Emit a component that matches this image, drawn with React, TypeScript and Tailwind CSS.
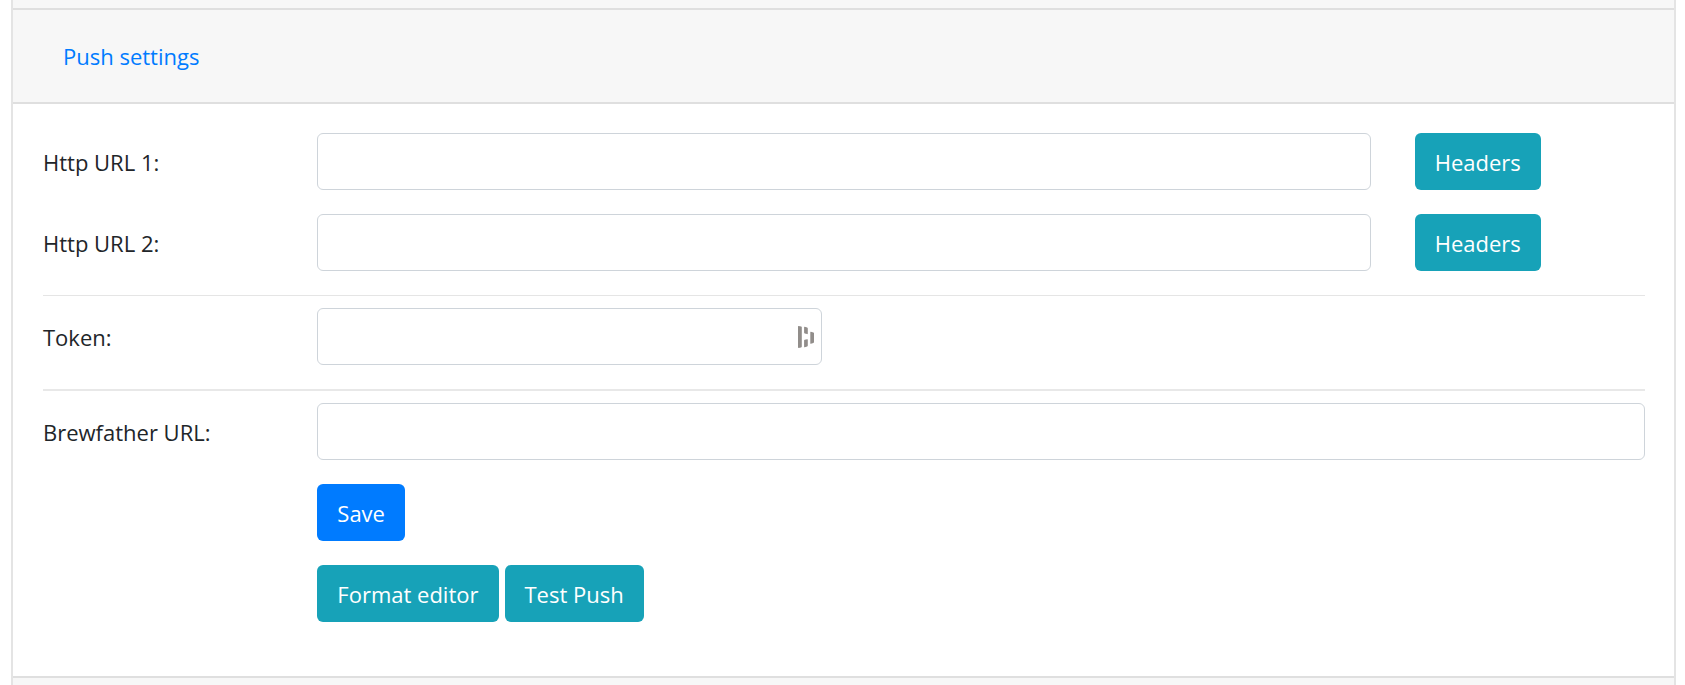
import type { ReactNode } from "react";

const fieldClass =
  "h-[57px] w-full rounded-md border border-[#ced4da] bg-white px-[18px] text-[22px] text-[#495057] outline-none focus:border-[#80bdff]";

function Label({ htmlFor, children }: { htmlFor: string; children: ReactNode }) {
  return (
    <label htmlFor={htmlFor} className="col-span-2 whitespace-nowrap">
      {children}
    </label>
  );
}

function Row({ children }: { children: ReactNode }) {
  return <div className="mb-6 grid grid-cols-12 items-center gap-x-11">{children}</div>;
}

function Button({ primary = false, children }: { primary?: boolean; children: ReactNode }) {
  return (
    <button
      type="button"
      className={
        primary
          ? "h-[57px] cursor-pointer whitespace-nowrap rounded-md bg-[#007bff] px-5 text-white"
          : "h-[57px] cursor-pointer whitespace-nowrap rounded-md bg-[#17a2b8] px-5 text-white"
      }
    >
      {children}
    </button>
  );
}

function VaultIcon() {
  return (
    <svg width="16" height="22" viewBox="0 0 16 22" fill="#918d8a" aria-hidden="true">
      <path d="M0 .6Q0 0 .7 .1L3.2 .6Q3.8 .8 3.8 1.4V20.6Q3.8 21.2 3.1 21.4L.7 22Q0 22 0 21.3Z" />
      <path d="M6.1 1.2Q6.1 .6 6.7 .8L9.2 1.6Q9.8 1.9 9.8 2.5V7.5Q9.8 8.3 9.2 8.1L6.7 7.4Q6.1 7.2 6.1 6.6Z" />
      <path d="M6.1 14.6Q6.1 14 6.7 13.8L9.2 13.2Q9.8 13.1 9.8 13.7V19.6Q9.8 20.2 9.2 20.5L6.7 21.3Q6.1 21.5 6.1 20.8Z" />
      <path d="M12.3 6.2Q12.3 5.5 12.9 5.7L15.4 6.4Q16 6.6 16 7.2V16Q16 16.6 15.4 16.9L12.9 17.7Q12.3 17.9 12.3 17.2Z" />
    </svg>
  );
}

export default function App() {
  return (
    <main className="bg-white pr-[9px] pl-[11px] font-['Open_Sans','Noto_Sans',sans-serif] text-[22px] leading-[36px] text-[#212529]">
      <div className="border-x-2 border-[#e4e4e4]">
        <div className="h-2 bg-[#f7f7f7]" />
        <section>
          <h2 className="flex h-24 items-center border-y-2 border-[#dfdfdf] bg-[#f7f7f7] px-[30px]">
            <button type="button" className="cursor-pointer px-5 text-[#007bff]">
              Push settings
            </button>
          </h2>
          <form className="pt-[29px] pr-[29px] pb-[30px] pl-[30px]">
            <Row>
              <Label htmlFor="url1">Http URL 1:</Label>
              <div className="col-span-8">
                <input id="url1" type="url" className={fieldClass} />
              </div>
              <div className="col-span-2">
                <Button>Headers</Button>
              </div>
            </Row>
            <Row>
              <Label htmlFor="url2">Http URL 2:</Label>
              <div className="col-span-8">
                <input id="url2" type="url" className={fieldClass} />
              </div>
              <div className="col-span-2">
                <Button>Headers</Button>
              </div>
            </Row>
            <hr className="mb-3 border-t border-[#e5e5e5]" />
            <Row>
              <Label htmlFor="token">Token:</Label>
              <div className="relative col-span-4">
                <input id="token" type="text" className={fieldClass} />
                <span className="pointer-events-none absolute inset-y-0 right-2 flex items-center">
                  <VaultIcon />
                </span>
              </div>
            </Row>
            <hr className="mb-3 border-t-2 border-[#e8e8e8]" />
            <Row>
              <Label htmlFor="brewfather">Brewfather URL:</Label>
              <div className="col-span-10">
                <input id="brewfather" type="url" className={fieldClass} />
              </div>
            </Row>
            <Row>
              <div className="col-span-10 col-start-3 flex">
                <Button primary>Save</Button>
              </div>
            </Row>
            <Row>
              <div className="col-span-10 col-start-3 flex gap-1.5">
                <Button>Format editor</Button>
                <Button>Test Push</Button>
              </div>
            </Row>
          </form>
        </section>
        <div className="h-[9px] border-t-2 border-[#dfdfdf] bg-[#f7f7f7]" />
      </div>
    </main>
  );
}
